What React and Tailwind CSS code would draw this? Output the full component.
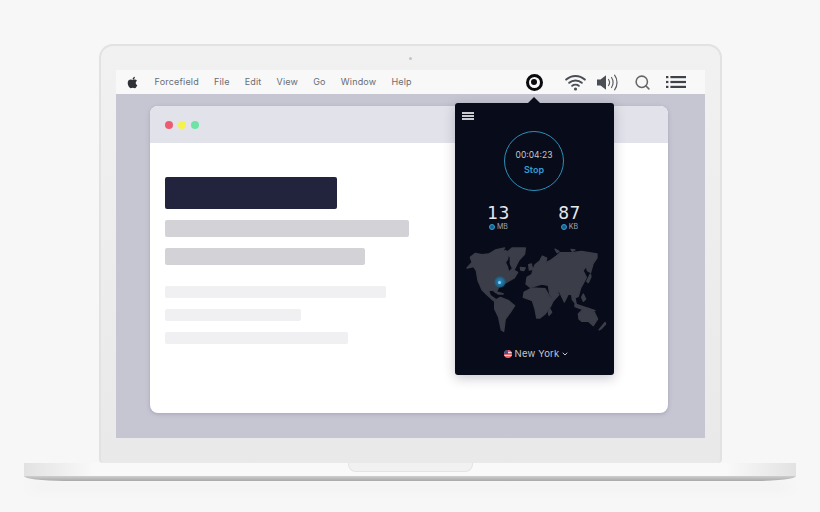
// App.jsx — laptop mockup with a menu bar app popover open over a browser-like window.
import { FaApple } from 'react-icons/fa';
import { Search, ChevronDown } from 'lucide-react';

const MENU_ITEMS = ['Forcefield', 'File', 'Edit', 'View', 'Go', 'Window', 'Help'];

function WifiIcon() {
  return (
    <svg width="21" height="17" viewBox="0 0 21 17" fill="none" stroke="#4b4f55" strokeWidth="2" strokeLinecap="round">
      <path d="M1.2 5.6C6.5 .8 14.5 .8 19.8 5.6" />
      <path d="M4.2 8.8C7.7 5.7 13.3 5.7 16.8 8.8" />
      <path d="M7.2 11.8C9 10.4 12 10.4 13.8 11.8" />
      <circle cx="10.5" cy="15" r="1.6" fill="#4b4f55" stroke="none" />
    </svg>
  );
}

function VolumeIcon() {
  return (
    <svg width="23" height="17" viewBox="0 0 23 17" fill="none" stroke="#5a5d63" strokeWidth="1.2" strokeLinecap="round">
      <path d="M0 5.5H3.5L9 1.2V15.8L3.5 11.5H0Z" fill="#4b4f55" stroke="none" />
      <path d="M11.5 5.5C12.8 7.3 12.8 9.7 11.5 11.5" />
      <path d="M14.5 3.5C16.6 6.3 16.6 10.7 14.5 13.5" />
      <path d="M17.6 1.2C20.8 5.3 20.8 11.7 17.6 15.8" />
    </svg>
  );
}

function ListIcon() {
  return (
    <svg width="20" height="12" viewBox="0 0 20 12" fill="#3f4248">
      <rect x="0" y="0" width="2.4" height="2.2" />
      <rect x="0" y="4.9" width="2.4" height="2.2" />
      <rect x="0" y="9.8" width="2.4" height="2.2" />
      <rect x="4.4" y="0" width="15.6" height="2.2" />
      <rect x="4.4" y="4.9" width="15.6" height="2.2" />
      <rect x="4.4" y="9.8" width="15.6" height="2.2" />
    </svg>
  );
}

// Simplified continents, traced at 3x on a 148x90 box
function WorldMap() {
  return (
    <svg width="148" height="90" viewBox="0 0 444 270" fill="#3b3d48" stroke="#3b3d48" strokeWidth="4" strokeLinejoin="round">
      {/* Americas */}
      <path d="M15,72 L30,55 L25,40 L40,28 L60,32 L80,30 L100,18 L128,12 L118,24 L130,20 L140,25 L137,45 L130,55 L137,70 L140,85 L150,75 L167,85 L157,102 L132,116 L112,126 L102,146 L92,138 L80,140 L85,155 L100,165 L95,170 L75,152 L60,137 L48,110 L43,80 L35,68 Z" />
      <path d="M135,25 L150,12 L190,12 L188,30 L170,50 L155,80 L145,60 L145,40 Z" />
      <path d="M98,170 L115,160 L140,170 L158,185 L145,205 L130,225 L125,262 L118,258 L110,220 L98,195 Z" />
      <path d="M98,142 L112,146 L124,150 L108,150 Z" />
      <path d="M175,70 L190,72 L185,80 L176,78 Z" />
      <path d="M200,62 L208,60 L212,76 L202,78 Z" />
      <g transform="translate(219,0)">
        {/* Eurasia */}
        <path d="M0,62 L15,50 L22,36 L35,42 L32,56 L48,48 L62,38 L75,26 L110,26 L140,22 L186,30 L186,42 L174,60 L167,85 L157,80 L154,67 L144,80 L154,100 L144,120 L137,132 L130,157 L120,162 L124,182 L112,167 L110,152 L100,150 L88,174 L74,144 L64,142 L72,152 L56,170 L44,150 L40,124 L20,120 L0,126 L-15,130 L-27,120 L-24,100 L-10,92 L-5,75 Z" />
        {/* Africa */}
        <path d="M-33,145 L-10,132 L30,134 L42,155 L55,170 L45,190 L30,210 L15,222 L5,222 L0,195 L-8,170 L-35,160 Z" />
        <path d="M45,195 L50,205 L42,214 L40,204 Z" />
        {/* Islands */}
        <path d="M120,180 L135,185 L165,195 L180,200 L170,202 L140,195 L120,188 Z" />
        <path d="M145,150 L152,165 L145,172 L140,160 Z" />
        <path d="M155,112 L166,90 L168,98 L160,116 Z" />
        <path d="M60,15 L72,22 L66,26 Z" />
        <path d="M108,16 L120,18 L112,22 Z" />
        {/* Australia */}
        <path d="M130,210 L145,195 L165,197 L178,205 L188,225 L175,245 L160,232 L140,232 L132,225 Z" />
        <path d="M210,235 L212,240 L198,255 L192,258 Z" />
      </g>
    </svg>
  );
}

function Stat({ value, unit }) {
  return (
    <div className="flex flex-col items-center w-[44px]">
      <span className="text-[17px] leading-[20px] text-[#e6e8ec] tracking-[0.5px] font-['DejaVu_Sans',sans-serif]">{value}</span>
      <span className="flex items-center gap-[2px] text-[7px] leading-[10px] text-[#a4a8b2] -mt-[1px]">
        <span className="w-[6px] h-[6px] rounded-full border border-[#2f9fd6] bg-[#1b5f85]" />
        {unit}
      </span>
    </div>
  );
}

function Popover() {
  return (
    <div className="absolute left-[339px] top-[33px] w-[159px] h-[272px] flex flex-col items-center rounded-[3px] bg-[#080b1a] shadow-[0_3px_12px_rgba(30,30,60,0.25)] font-['Inter',sans-serif]">
      {/* Arrow up to the status icon */}
      <div className="absolute -top-[6px] left-[73px] w-0 h-0 border-x-[6px] border-x-transparent border-b-[6px] border-b-[#080b1a]" />

      <div className="self-start flex flex-col gap-[1.5px] ml-[7px] mt-[9px]">
        <div className="w-[12px] h-[1.5px] bg-[#c8cad0]" />
        <div className="w-[12px] h-[1.5px] bg-[#c8cad0]" />
        <div className="w-[12px] h-[1.5px] bg-[#c8cad0]" />
      </div>

      <div className="mt-[11.5px] pt-[3px] w-[60px] h-[60px] rounded-full border-[1.5px] border-[#2a8fb8] flex flex-col items-center justify-center">
        <span className="text-[8.5px] leading-[12px] text-[#c4c6cc]">00:04:23</span>
        <span className="text-[9px] leading-[12px] mt-[3px] font-semibold text-[#2f9fd6]">Stop</span>
      </div>

      <div className="mt-[12px] flex gap-[27px]">
        <Stat value="13" unit="MB" />
        <Stat value="87" unit="KB" />
      </div>

      <div className="relative self-start mt-[12px] ml-[7px] w-[148px] h-[90px]">
        <WorldMap />
        {/* New York pin */}
        <div className="absolute left-[32px] top-[32px] w-[12px] h-[12px] rounded-full bg-[radial-gradient(circle,#2f8fc4_0%,#1d5f86_55%,transparent_75%)] flex items-center justify-center">
          <div className="w-[3px] h-[3px] rounded-full bg-[#7fd4f7]" />
        </div>
      </div>

      <div className="mt-[14px] ml-[5px] flex items-center text-[9.5px] leading-[12px] tracking-[0.2px] text-[#c4c6cc]">
        <span className="w-[8px] h-[8px] rounded-full overflow-hidden mr-[3px] bg-[linear-gradient(180deg,#e8646c_0_22%,#f3d6d6_22%_40%,#e8646c_40%_60%,#f3d6d6_60%_78%,#e8646c_78%)]">
          <span className="block w-[4px] h-[4px] bg-[#46508f]" />
        </span>
        New York
        <ChevronDown size={8} strokeWidth={3} className="ml-[2px]" />
      </div>
    </div>
  );
}

export default function App() {
  return (
    <div className="relative w-[820px] h-[512px] overflow-hidden bg-[#f7f7f7] pt-[44px] flex flex-col items-center font-['Inter',sans-serif]">

      {/* Lid */}
      <div className="w-[623px] h-[419px] shrink-0 flex flex-col items-center rounded-t-[14px] rounded-b-[4px] bg-[linear-gradient(180deg,#f1f1f1,#e9e9e9)] border-[2px] border-b-0 border-[#e2e2e2]">
        <div className="h-[24px] w-full flex items-center justify-center">
          <div className="w-[3px] h-[3px] rounded-full bg-[#c4c4c4]" />
        </div>

        {/* Screen */}
        <div className="relative w-[589px] h-[368px] bg-[#c6c6d3]">

          {/* Menu bar */}
          <div className="h-[24px] bg-[#f8f8f8] flex items-center text-[#696c74] text-[9px] tracking-[0.2px]">
            <FaApple size={13} className="ml-[10px] mr-[16px] text-[#2f3136]" />
            <div className="flex gap-[15px]">
              {MENU_ITEMS.map((item) => (
                <span key={item}>{item}</span>
              ))}
            </div>
            <div className="ml-auto flex items-center">
              <div className="w-[17px] h-[17px] rounded-full border-[3px] border-[#0b0b0f] flex items-center justify-center">
                <div className="w-[6px] h-[6px] rounded-full bg-[#0b0b0f]" />
              </div>
              <div className="ml-[22px]"><WifiIcon /></div>
              <div className="ml-[11px]"><VolumeIcon /></div>
              <Search size={17} strokeWidth={2.2} color="#666" className="ml-[14px]" />
              <div className="ml-[15px] mr-[19px]"><ListIcon /></div>
            </div>
          </div>

          {/* Window */}
          <div className="mt-[12px] ml-[34px] w-[518px] h-[307px] rounded-[8px] bg-white shadow-[0_1px_4px_rgba(80,80,120,0.3)] overflow-hidden">
            <div className="h-[37px] bg-[#e2e3ea] flex items-center gap-[5px] pl-[15px]">
              <div className="w-[8px] h-[8px] rounded-full bg-[#ee5a6f]" />
              <div className="w-[8px] h-[8px] rounded-full bg-[#f5f24a]" />
              <div className="w-[8px] h-[8px] rounded-full bg-[#6fe3a5]" />
            </div>
            <div className="pl-[15px] pt-[34px] flex flex-col">
              <div className="w-[172px] h-[32px] rounded-[2px] bg-[#22243d]" />
              <div className="mt-[11px] w-[244px] h-[17px] rounded-[2px] bg-[#d2d2d7]" />
              <div className="mt-[11px] w-[200px] h-[17px] rounded-[2px] bg-[#d2d2d7]" />
              <div className="mt-[21px] w-[221px] h-[12px] rounded-[2px] bg-[#f0f0f3]" />
              <div className="mt-[11px] w-[136px] h-[12px] rounded-[2px] bg-[#f0f0f3]" />
              <div className="mt-[11px] w-[183px] h-[12px] rounded-[2px] bg-[#f0f0f3]" />
            </div>
          </div>

          <Popover />
        </div>
      </div>

      {/* Base */}
      <div className="relative z-10 w-[772px] h-[13px] shrink-0 flex justify-center bg-[linear-gradient(90deg,#e2e2e2,#f9f9f9_9%,#f9f9f9_91%,#e2e2e2)]">
        <div className="w-[125px] h-[9px] rounded-b-[8px] bg-[#f1f1f1] border border-t-0 border-[#e4e4e4]" />
      </div>
      <div className="w-[772px] h-[5px] shrink-0 [border-radius:0_0_40px_40px/0_0_5px_5px] bg-[linear-gradient(180deg,#cfcfcf,#a8a8a8)] shadow-[0_8px_14px_-2px_rgba(0,0,0,0.22)]" />
    </div>
  );
}
